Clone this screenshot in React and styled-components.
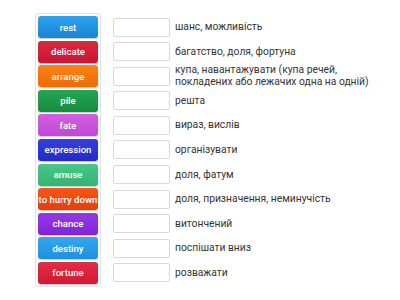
import React from 'react'
import styled, { createGlobalStyle } from 'styled-components'

const GlobalStyle = createGlobalStyle`
  body {
    margin: 0;
    background: #ffffff;
    font-family: Roboto, "Noto Sans", sans-serif;
  }
`

const StyledPage = styled.div`
  display: flex;
  align-items: flex-start;
  padding: 13px 0 0 35px;
  gap: 12px;
`

const StyledWordPanel = styled.div`
  display: flex;
  flex-direction: column;
  gap: 2.6px;
  width: 60px;
  padding: 2px;
  border: 1px solid #dde3ea;
  border-radius: 3px;
`

const StyledWord = styled.div`
  height: 22px;
  display: flex;
  align-items: center;
  justify-content: center;
  color: #ffffff;
  font-size: 9.6px;
  font-weight: 500;
  white-space: nowrap;
  border-radius: 3px;
  background: linear-gradient(to bottom, ${p => p.$top}, ${p => p.$bottom});
  box-shadow: 0 1px 1px rgba(0,0,0,0.2);
`

const StyledAnswers = styled.div`
  display: flex;
  flex-direction: column;
  gap: 2.6px;
  padding-top: 3px;
`

const StyledRow = styled.div`
  height: 22px;
  display: flex;
  align-items: center;
  gap: 5px;
`

const StyledSlot = styled.div`
  flex: 0 0 auto;
  width: 55px;
  height: 17px;
  border: 1px solid #d9d9d9;
  border-radius: 2px;
  background: #ffffff;
`

const StyledMeaning = styled.div`
  max-width: 200px;
  font-size: 10.3px;
  line-height: 12px;
  color: #333333;
`

const words = [
  { text: 'rest', top: '#2ea3f0', bottom: '#1a82d6' },
  { text: 'delicate', top: '#e0263f', bottom: '#c41832' },
  { text: 'arrange', top: '#fb8512', bottom: '#ef6a05' },
  { text: 'pile', top: '#25a653', bottom: '#178a3e' },
  { text: 'fate', top: '#d35fe2', bottom: '#c048d4' },
  { text: 'expression', top: '#3540e2', bottom: '#222ac8' },
  { text: 'amuse', top: '#48c78a', bottom: '#35b274' },
  { text: 'to hurry down', top: '#f75619', bottom: '#e63d0c' },
  { text: 'chance', top: '#9638e8', bottom: '#7f25d6' },
  { text: 'destiny', top: '#34a8ee', bottom: '#1f8fdf' },
  { text: 'fortune', top: '#e62c46', bottom: '#cf1a35' },
]

const meanings = [
  'шанс, можливість',
  'багатство, доля, фортуна',
  'купа, навантажувати (купа речей, покладених або лежачих одна на одній)',
  'решта',
  'вираз, вислів',
  'організувати',
  'доля, фатум',
  'доля, призначення, неминучість',
  'витончений',
  'поспішати вниз',
  'розважати',
]

const App = () => {
  return (
    <>
      <GlobalStyle />
      <StyledPage>
        <StyledWordPanel>
          {words.map((w, i) => (
            <StyledWord key={i} $top={w.top} $bottom={w.bottom}>{w.text}</StyledWord>
          ))}
        </StyledWordPanel>
        <StyledAnswers>
          {meanings.map((m, i) => (
            <StyledRow key={i}>
              <StyledSlot />
              <StyledMeaning>{m}</StyledMeaning>
            </StyledRow>
          ))}
        </StyledAnswers>
      </StyledPage>
    </>
  )
}

export default App
